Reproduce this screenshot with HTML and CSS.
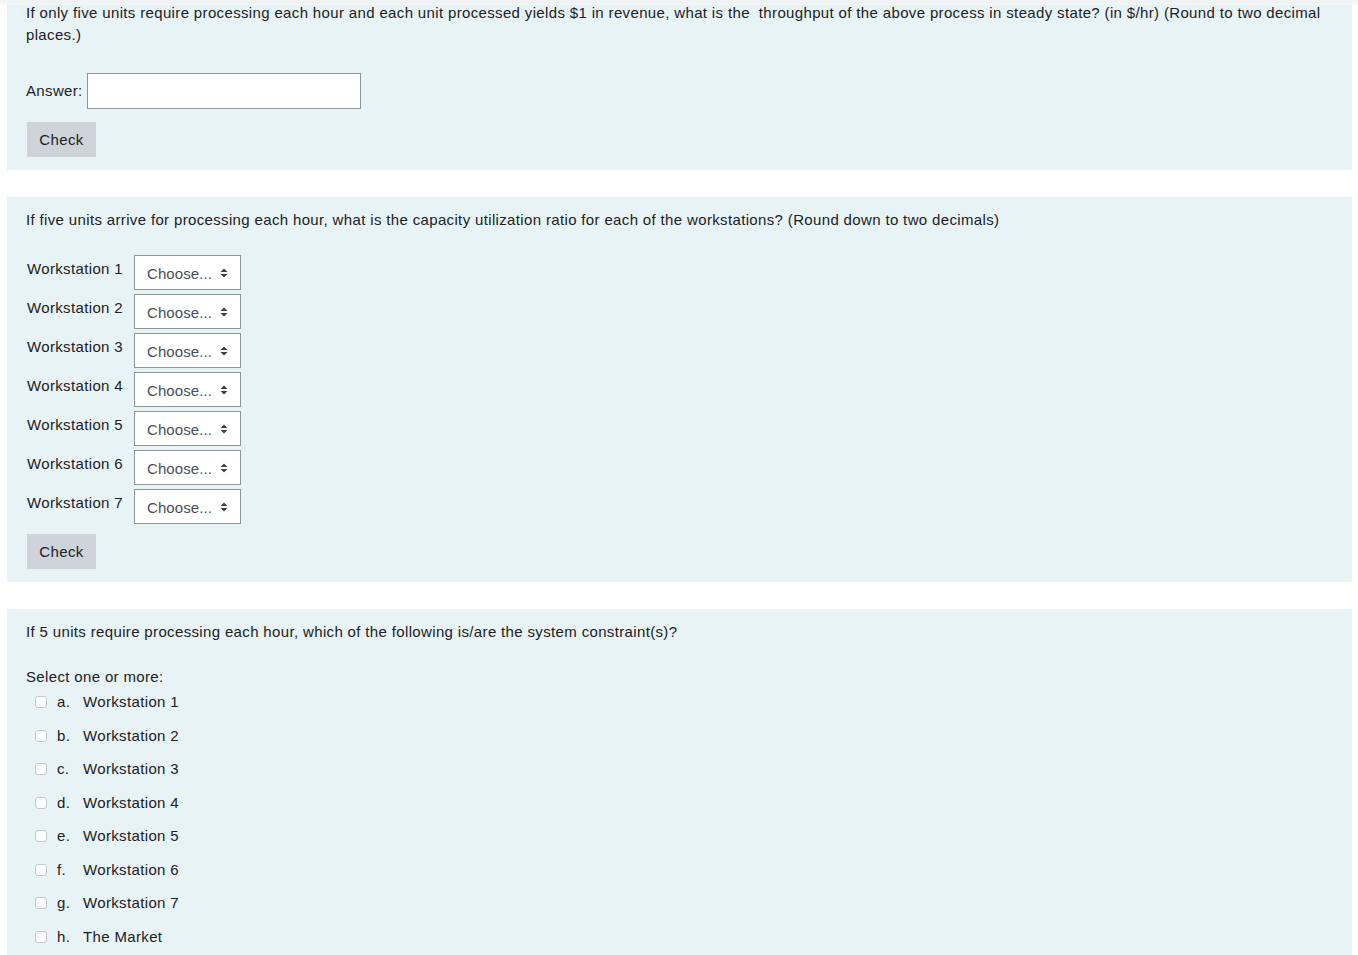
FILE: index.html
```html
<!DOCTYPE html>
<html>
<head>
<meta charset="utf-8">
<link rel="stylesheet" href="styles.css">
</head>
<body>
<div class="page">
  <div class="panel first">
    <div class="shade"></div>
    <p class="qtext">If only five units require processing each hour and each unit processed yields $1 in revenue, what is the &nbsp;throughput of the above process in steady state? (in $/hr) (Round to two decimal places.)</p>
    <div class="answer-row">
      <label class="answer-label">Answer:</label>
      <input class="answer-input" type="text">
    </div>
    <button class="check">Check</button>
  </div>

  <div class="panel">
    <p class="qtext">If five units arrive for processing each hour, what is the capacity utilization ratio for each of the workstations? (Round down to two decimals)</p>
    <div class="match">
      <div class="mlabel">Workstation 1</div><div class="sel"><select><option>Choose...</option></select><svg class="arrow" width="8" height="10" viewBox="0 0 8 10"><path d="M4 0.5 L7.5 4 H0.5 Z M4 9.5 L7.5 6 H0.5 Z" fill="#3a3f44"/></svg></div>
      <div class="mlabel">Workstation 2</div><div class="sel"><select><option>Choose...</option></select><svg class="arrow" width="8" height="10" viewBox="0 0 8 10"><path d="M4 0.5 L7.5 4 H0.5 Z M4 9.5 L7.5 6 H0.5 Z" fill="#3a3f44"/></svg></div>
      <div class="mlabel">Workstation 3</div><div class="sel"><select><option>Choose...</option></select><svg class="arrow" width="8" height="10" viewBox="0 0 8 10"><path d="M4 0.5 L7.5 4 H0.5 Z M4 9.5 L7.5 6 H0.5 Z" fill="#3a3f44"/></svg></div>
      <div class="mlabel">Workstation 4</div><div class="sel"><select><option>Choose...</option></select><svg class="arrow" width="8" height="10" viewBox="0 0 8 10"><path d="M4 0.5 L7.5 4 H0.5 Z M4 9.5 L7.5 6 H0.5 Z" fill="#3a3f44"/></svg></div>
      <div class="mlabel">Workstation 5</div><div class="sel"><select><option>Choose...</option></select><svg class="arrow" width="8" height="10" viewBox="0 0 8 10"><path d="M4 0.5 L7.5 4 H0.5 Z M4 9.5 L7.5 6 H0.5 Z" fill="#3a3f44"/></svg></div>
      <div class="mlabel">Workstation 6</div><div class="sel"><select><option>Choose...</option></select><svg class="arrow" width="8" height="10" viewBox="0 0 8 10"><path d="M4 0.5 L7.5 4 H0.5 Z M4 9.5 L7.5 6 H0.5 Z" fill="#3a3f44"/></svg></div>
      <div class="mlabel">Workstation 7</div><div class="sel"><select><option>Choose...</option></select><svg class="arrow" width="8" height="10" viewBox="0 0 8 10"><path d="M4 0.5 L7.5 4 H0.5 Z M4 9.5 L7.5 6 H0.5 Z" fill="#3a3f44"/></svg></div>
    </div>
    <button class="check check2">Check</button>
  </div>

  <div class="panel last">
    <p class="qtext">If 5 units require processing each hour, which of the following is/are the system constraint(s)?</p>
    <p class="prompt">Select one or more:</p>
    <div class="options">
      <div class="opt"><span class="box"></span><span class="letter">a.</span><span>Workstation 1</span></div>
      <div class="opt"><span class="box"></span><span class="letter">b.</span><span>Workstation 2</span></div>
      <div class="opt"><span class="box"></span><span class="letter">c.</span><span>Workstation 3</span></div>
      <div class="opt"><span class="box"></span><span class="letter">d.</span><span>Workstation 4</span></div>
      <div class="opt"><span class="box"></span><span class="letter">e.</span><span>Workstation 5</span></div>
      <div class="opt"><span class="box"></span><span class="letter">f.</span><span>Workstation 6</span></div>
      <div class="opt"><span class="box"></span><span class="letter">g.</span><span>Workstation 7</span></div>
      <div class="opt"><span class="box"></span><span class="letter">h.</span><span>The Market</span></div>
    </div>
  </div>
</div>
</body>
</html>
```

FILE: styles.css
```css
html, body {
  margin: 0;
  padding: 0;
  background: #ffffff;
}
body {
  font-family: "Liberation Sans", Arial, Helvetica, sans-serif;
  font-size: 15px;
  line-height: 22px;
  letter-spacing: 0.35px;
  color: #1d2125;
  height: 955px;
  overflow: hidden;
}
.page {
  padding: 0 6px 0 7px;
  display: flex;
  flex-direction: column;
  gap: 27px;
}
.panel {
  background: #e7f3f5;
  padding: 12px 19px 13px 19px;
  position: relative;
}
.panel.first {
  padding-top: 2px;
}
.shade {
  position: absolute;
  left: -7px;
  right: -6px;
  top: 0;
  height: 5px;
  background: linear-gradient(to bottom, rgba(240,242,243,1), rgba(246,248,249,0.6));
  pointer-events: none;
}
.qtext {
  margin: 0;
  padding-right: 10px;
}
.answer-row {
  display: flex;
  align-items: center;
  margin-top: 27px;
}
.answer-label {
  margin-right: 4px;
}
.answer-input {
  width: 274px;
  height: 36px;
  box-sizing: border-box;
  border: 1px solid #8f959e;
  background: #fff;
  margin: 0;
  padding: 0 8px;
  font: inherit;
}
.check {
  display: block;
  margin-top: 13px;
  margin-left: 1px;
  width: 69px;
  height: 35px;
  border: none;
  border-radius: 0;
  background: #ced4da;
  color: #1d2125;
  font-family: inherit;
  font-size: 15px;
  letter-spacing: 0.35px;
  padding: 0;
}
.check2 {
  margin-top: 10px;
}
.match {
  margin-top: 24px;
  margin-left: 1px;
  display: grid;
  grid-template-columns: 107px 107px;
  row-gap: 4px;
  align-items: start;
}
.mlabel {
  padding-top: 3px;
  white-space: nowrap;
}
.sel {
  position: relative;
  width: 107px;
  height: 35px;
}
.sel select {
  -webkit-appearance: none;
  appearance: none;
  width: 107px;
  height: 35px;
  box-sizing: border-box;
  border: 1px solid #8f959e;
  border-radius: 0;
  background: #fff;
  color: #495057;
  font-family: inherit;
  font-size: 15px;
  letter-spacing: 0.1px;
  padding: 1px 0 0 12px;
  margin: 0;
}
.arrow {
  position: absolute;
  left: 86px;
  top: 13px;
  pointer-events: none;
}
.prompt {
  margin: 23px 0 0 0;
}
.options {
  margin-top: 3px;
  display: flex;
  flex-direction: column;
  gap: 11.5px;
}
.opt {
  display: flex;
  align-items: center;
  height: 22px;
}
.box {
  width: 10px;
  height: 10px;
  border: 1px solid #c4c8cc;
  border-radius: 3px;
  background: #fff;
  margin-left: 9px;
  margin-right: 10px;
}
.letter {
  width: 26px;
}
.last {
  padding-bottom: 7px;
}
```
